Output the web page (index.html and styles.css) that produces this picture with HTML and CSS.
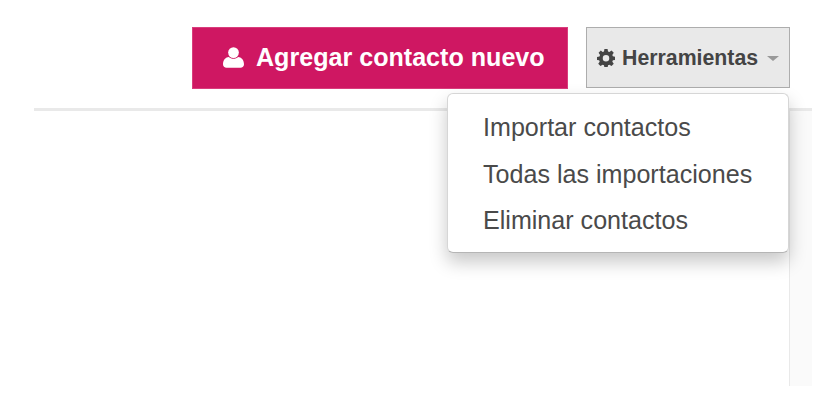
FILE: index.html
```html
<!DOCTYPE html>
<html lang="es">
<head>
<meta charset="utf-8">
<title>Contactos</title>
<link rel="stylesheet" href="styles.css">
</head>
<body>
<div class="page">
  <div class="toolbar">
    <button class="btn-add" type="button">
      <svg class="icon-user" viewBox="1 0.9 18 17.6" width="21" height="21" aria-hidden="true">
        <circle cx="10" cy="5.5" r="4.6" fill="#fff"/>
        <path d="M1 15.5C1 11.6 3.4 9.2 6 9.2c1 1 2.4 1.600 4 1.600s3-.6 4-1.600c2.600 0 5 2.400 5 6.300 0 1.900-1.300 3-3 3H4c-1.700 0-3-1.100-3-3z" fill="#fff"/>
      </svg>
      <span>Agregar contacto nuevo</span>
    </button>
    <div class="tools">
      <button class="btn-tools" type="button">
        <svg class="icon-gear" viewBox="0 0 16 16" width="14" height="14" aria-hidden="true">
          <path fill-rule="evenodd" fill="#444" d="M6.6 0h2.8l.4 2.2 1.2.5L12.900 1.400l2 2-1.300 1.900.5 1.200 2.200.4v2.800l-2.200.4-.5 1.200 1.300 1.900-2 2-1.900-1.300-1.200.5-.4 2.200H6.600l-.4-2.200-1.200-.5-1.900 1.300-2-2 1.300-1.900-.5-1.200L0 9.800V7l2.200-.4.5-1.200L1.400 3.400l2-2L5 2.700l1.200-.5zM8 5.400a2.900 2.900 0 1 0 0 5.800 2.900 2.900 0 0 0 0-5.800z"/>
        </svg>
        <span>Herramientas</span>
        <i class="caret"></i>
      </button>
      <ul class="menu">
        <li>Importar contactos</li>
        <li>Todas las importaciones</li>
        <li>Eliminar contactos</li>
      </ul>
    </div>
  </div>
  <div class="rule"></div>
  <div class="content">
    <div class="main"></div>
    <div class="side"></div>
  </div>
</div>
</body>
</html>
```
FILE: styles.css
```css
* { box-sizing: border-box; }
html, body { margin: 0; height: 100%; background: #fff; }
body { font-family: "Liberation Sans", Arial, sans-serif; overflow: hidden; }
.page { width: 778px; margin-left: 34px; padding-top: 27px; }
.toolbar { display: flex; justify-content: flex-end; align-items: flex-start; gap: 18px; padding-right: 22px; height: 81px; }
.btn-add {
  display: flex; align-items: center; gap: 12px;
  width: 376px; height: 62px; padding: 0 0 2px 30px;
  background: #cf1762; border: 1px solid #d93d7c; color: #fff;
  font: bold 25.1px/28px "Liberation Sans", Arial, sans-serif;
}
.icon-user { flex: none; margin-top: 1px; }
.tools { position: relative; }
.btn-tools {
  display: flex; align-items: center; gap: 7px;
  width: 204px; height: 61px; padding: 0 0 0 10px;
  background: #e9e9e9; border: 1px solid #adadad; color: #444;
  font: bold 21.3px/24px "Liberation Sans", Arial, sans-serif;
}
.icon-gear { width: 18px; height: 18px; flex: none; }
.caret { width: 0; height: 0; margin-left: 2px; margin-top: 2px; border-top: 5px solid #999; border-left: 6px solid transparent; border-right: 6px solid transparent; }
.menu {
  position: absolute; right: 1px; top: 66px; z-index: 2;
  width: 342px; height: 160px; margin: 0; padding: 10px 0 0;
  list-style: none; background: #fff;
  border: 1px solid #d6d6d6; border-bottom-color: #b5b5b5; border-radius: 6px;
  box-shadow: 0 9px 18px rgba(0,0,0,.22);
}
.menu li { padding-left: 35px; height: 46.500px; font-size: 25.100px; line-height: 46px; color: #4a4a4a; }
.rule { height: 3px; background: #e9e9e9; }
.content { display: flex; height: 275px; }
.main { width: 755px; }
.side { flex: 1; background: #fafafa; border-left: 1px solid #e9e9e9; }
```
